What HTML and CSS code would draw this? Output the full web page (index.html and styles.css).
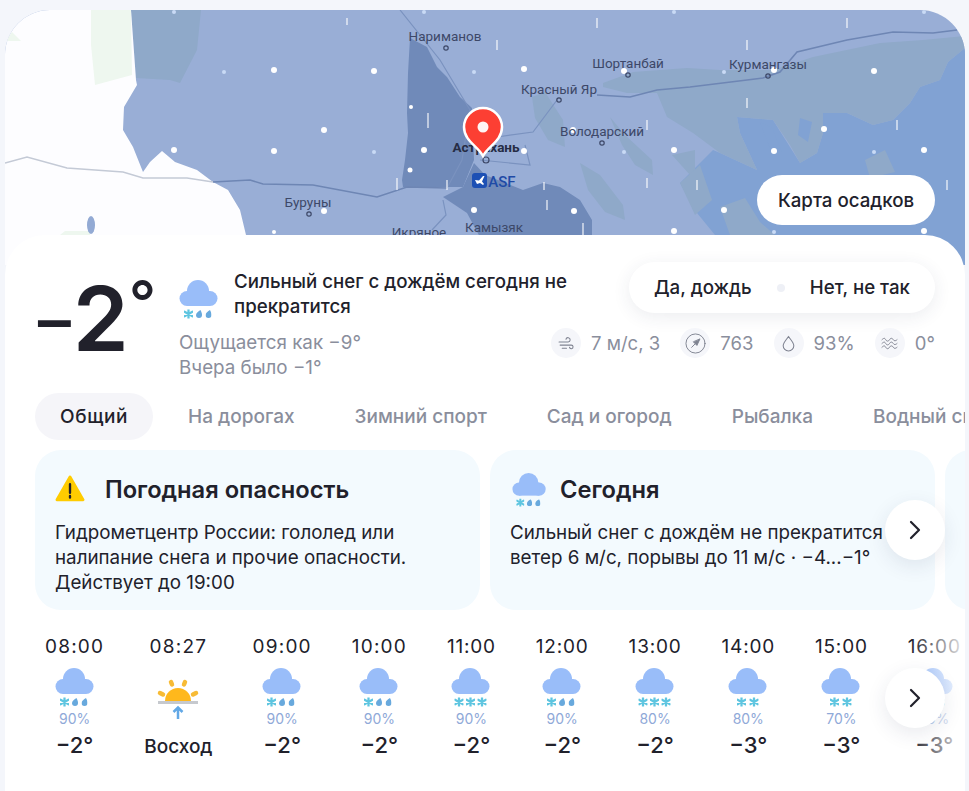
FILE: index.html
```html
<!DOCTYPE html>
<html lang="ru">
<head>
<meta charset="utf-8">
<title>Погода</title>
<link rel="stylesheet" href="styles.css">
</head>
<body>
<svg class="defs" width="0" height="0" aria-hidden="true">
  <defs>
    <symbol id="cloud" viewBox="0 0 40 40">
      <g class="cl"><circle cx="19" cy="12" r="11"/><circle cx="8" cy="19.5" r="7.5"/><circle cx="31" cy="19.5" r="7.5"/><rect x="8" y="12" width="23" height="15"/></g>
    </symbol>
    <symbol id="flake" viewBox="0 0 8 8">
      <path class="fl" d="M4 0v8M.5 2l7 4M.5 6l7-4"/>
    </symbol>
    <symbol id="drop" viewBox="0 0 6 8">
      <path class="dr" d="M4.5 0C5.5 2 6 3.500 6 5A3 3 0 0 1 0 5C0 3 2.500 1 4.500 0Z"/>
    </symbol>
    <symbol id="mix" viewBox="0 0 40 40">
      <use href="#cloud" width="40" height="40"/>
      <use href="#flake" x="5" y="30.500" width="9" height="9"/>
      <use href="#drop" x="17" y="31" width="6" height="8"/>
      <use href="#drop" x="26.500" y="31" width="6" height="8"/>
    </symbol>
    <symbol id="snow3" viewBox="0 0 40 40">
      <use href="#cloud" width="40" height="40"/>
      <use href="#flake" x="3.500" y="30.500" width="9" height="9"/>
      <use href="#flake" x="15" y="30.500" width="9" height="9"/>
      <use href="#flake" x="26.500" y="30.500" width="9" height="9"/>
    </symbol>
    <symbol id="snow2" viewBox="0 0 40 40">
      <use href="#cloud" width="40" height="40"/>
      <use href="#flake" x="9" y="30.500" width="9" height="9"/>
      <use href="#flake" x="21.500" y="30.500" width="9" height="9"/>
    </symbol>
  </defs>
</svg>

<main class="page">
  <section class="map">
    <svg class="map-art" viewBox="5 10 960 255" width="960" height="255">
      <rect class="m-base" x="5" y="10" width="960" height="255"/>
      <path class="m-sea" d="M965 48L948 62L940 80L920 87L910 103L893 120L873 125L847 113L823 113L823 133L817 153L800 163L773 120L737 117L740 133L757 170L720 153L713 150L680 183L697 213L715 235L735 265L965 265Z"/>
      <path class="m-teal" d="M603 83L633 72L687 68L720 70L773 70L813 57L880 43L923 40L965 36L965 48L948 62L940 80L920 87L910 103L893 120L873 125L847 113L823 113L823 133L817 153L800 163L790 145L773 120L737 117L740 133L757 170L720 153L693 133L667 117L657 93L627 93L603 87Z"/>
      <path class="m-teal" d="M532 97L545 92L563 120L565 147L548 140L535 118Z"/>
      <path class="m-teal" d="M580 163L600 175L623 205L625 220L605 212L588 190Z"/>
      <path class="m-teal" d="M610 117L625 135L652 160L653 175L635 165L622 145Z"/>
      <path class="m-teal" d="M672 155L695 150L695 170L690 175Z"/>
      <path class="m-teal" d="M680 183L700 165L712 200L695 215Z"/>
      <path class="m-teal" d="M720 207L745 198L760 222L775 235L730 235Z"/>
      <path class="m-teal" d="M865 160L885 150L895 172L870 178Z"/>
      <path class="m-teal" d="M131 10L201 10L197 50L180 83L170 80L136 78Z"/>
      <path class="m-sea" d="M760 122L772 128L782 152L770 148ZM800 118L812 122L808 142L798 135Z"/>
      <path class="m-dark" d="M410 38L427 47L437 67L447 77L460 97L472 108L474 160L463 187L447 187L403 187L402 180L405 160L408 133L407 113L408 73Z"/>
      <path class="m-dark" d="M443 197L463 187L474 163L485 175L523 190L543 183L560 187L580 200L592 220L592 265L495 265L467 213Z"/>
      <path class="m-land" d="M5 10L131 10L136 80L137 85L124 107L123 130L133 147L143 172L150 162L162 151L175 162L197 170L213 182L228 190L240 210L246 235L246 265L5 265Z"/>
      <path class="m-green" d="M91 10L131 10L132 75L95 85L91 45Z"/>
      <path class="m-green" d="M5 41L21 41L12 32Z"/>
      <path class="m-green" d="M60 235L65 231L90 231L90 240L60 240Z"/>
      <ellipse class="m-lake" cx="91" cy="225" rx="4" ry="9"/>
      <path class="m-border-light" d="M5 163L27 157L67 168L123 172L143 178L187 178L213 182"/>
      <path class="m-border" d="M213 182L250 180L263 184L313 185L377 197L407 187L447 188"/>
      <path class="m-border" d="M597 95L630 97L657 90L690 87L747 80L763 78L780 72L797 52L847 40L893 32L933 33L957 30"/>
      <path class="m-river" d="M497 137L533 132L557 100M447 188L462 160L470 110L440 60L400 10M443 200L446 215L432 230M480 160L530 165L525 145"/>
      <g class="m-lines">
        <path d="M347 18v7M428 113v15M397 178v12M447 180v10M597 18v10M847 18v10M497 40v10M747 40v10M747 98v10M647 120v10M897 120v10M647 178v10M697 180v10M547 200v10M947 180v10M583 223v12M544 182v8"/>
      </g>
      <g class="m-dots">
        <circle cx="274" cy="70" r="3"/><circle cx="374" cy="71" r="3"/><circle cx="324" cy="130" r="3"/><circle cx="274" cy="151" r="3"/><circle cx="174" cy="150" r="3"/><circle cx="324" cy="211" r="3"/><circle cx="411" cy="107" r="2"/><circle cx="424" cy="150" r="3"/><circle cx="410" cy="170" r="2.500"/><circle cx="474" cy="210" r="3"/><circle cx="274" cy="232" r="2"/><circle cx="524" cy="69" r="3"/><circle cx="624" cy="71" r="3"/><circle cx="774" cy="70" r="3"/><circle cx="874" cy="71" r="3"/><circle cx="824" cy="129" r="3"/><circle cx="774" cy="151" r="3"/><circle cx="674" cy="150" r="3"/><circle cx="574" cy="211" r="3"/><circle cx="924" cy="150" r="3"/><circle cx="724" cy="210" r="3"/><circle cx="674" cy="231" r="3"/><circle cx="924" cy="231" r="3"/><circle cx="524" cy="151" r="3"/><circle cx="573" cy="130" r="3"/>
      </g>
      <g class="m-dots-soft">
        <circle cx="224" cy="72" r="2"/><circle cx="374" cy="152" r="2"/><circle cx="474" cy="72" r="2"/><circle cx="724" cy="72" r="2"/><circle cx="874" cy="152" r="2"/><circle cx="624" cy="152" r="2"/><circle cx="774" cy="232" r="2"/><circle cx="174" cy="12" r="2"/><circle cx="424" cy="12" r="2"/><circle cx="674" cy="12" r="2"/><circle cx="924" cy="12" r="2"/>
      </g>
      <g class="m-towns">
        <circle cx="446" cy="48" r="2.200"/><circle cx="628" cy="75" r="2.200"/><circle cx="768" cy="76" r="2.200"/><circle cx="559" cy="100" r="2.200"/><circle cx="602" cy="143" r="2.200"/><circle cx="486" cy="160" r="3"/><circle cx="309" cy="214" r="2.200"/>
      </g>
      <g class="m-labels">
        <text x="445" y="41">Нариманов</text>
        <text x="628" y="68">Шортанбай</text>
        <text x="768" y="69">Курмангазы</text>
        <text x="559" y="94">Красный Яр</text>
        <text x="602" y="136">Володарский</text>
        <text x="308" y="207">Буруны</text>
        <text x="419" y="237">Икряное</text>
        <text x="494" y="232">Камызяк</text>
        <text class="m-city" x="486" y="152">Астрахань</text>
        <text class="m-air" x="502" y="187">ASF</text>
      </g>
      <rect class="m-air-box" x="472" y="173" width="15" height="15" rx="3"/>
      <path class="m-air-plane" d="M475 180l4 0.500L483 176l1.500 0L482 181.500L484 184L483 185L480 183L477 184Z"/>
      <path class="m-pin" d="M483 156C478 146 464 141 464 127A19 19 0 0 1 502 127C502 141 488 146 483 156Z"/>
      <circle class="m-pin-dot" cx="483" cy="127" r="5.500"/>
    </svg>
    <button class="map-btn" type="button">Карта осадков</button>
  </section>

  <section class="card">
    <header class="head">
      <div class="temp"><span class="t-minus">−</span>2<span class="t-deg">°</span></div>
      <div class="summary">
        <div class="cond">
          <svg class="cond-icon"><use href="#mix"/></svg>
          <p class="cond-text">Сильный снег с дождём сегодня не прекратится</p>
        </div>
        <p class="sub">Ощущается как −9°<br>Вчера было −1°</p>
      </div>
      <div class="right">
        <div class="vote">
          <span class="vote-item">Да, дождь</span>
          <span class="vote-dot"></span>
          <span class="vote-item">Нет, не так</span>
        </div>
        <ul class="stats">
          <li class="stat">
            <span class="stat-ic"><svg viewBox="0 0 16 16" class="st"><path d="M1 6.500h8.500a2 2 0 1 0-2-2.500M2 9.500h10.500a1.700 1.700 0 1 1-1.700 2M4 12.500h4"/></svg></span>7 м/с, З
          </li>
          <li class="stat">
            <span class="stat-ic"><svg viewBox="0 0 22 22" class="st st-big"><circle cx="11" cy="11" r="10"/><path class="st-fill" d="M15.500 6.500L12.500 13L9 9.500Z"/><path d="M10.500 11.500L7 15"/></svg></span>763
          </li>
          <li class="stat">
            <span class="stat-ic"><svg viewBox="0 0 16 16" class="st"><path d="M8 1.500C10.500 5 13 7.500 13 10A5 5 0 0 1 3 10C3 7.500 5.500 5 8 1.500Z"/></svg></span>93%
          </li>
          <li class="stat">
            <span class="stat-ic"><svg viewBox="0 0 18 14" class="st"><path d="M1 3c2-2 3-2 4 0s3 2 4 0 3-2 4 0 3 1 4 0M1 7c2-2 3-2 4 0s3 2 4 0 3-2 4 0 3 1 4 0M1 11c2-2 3-2 4 0s3 2 4 0 3-2 4 0 3 1 4 0"/></svg></span>0°
          </li>
        </ul>
      </div>
    </header>

    <nav class="tabs">
      <a class="tab is-active">Общий</a>
      <a class="tab">На дорогах</a>
      <a class="tab">Зимний спорт</a>
      <a class="tab">Сад и огород</a>
      <a class="tab">Рыбалка</a>
      <a class="tab">Водный спорт</a>
    </nav>

    <div class="slides">
      <article class="slide">
        <h2 class="slide-title">
          <svg class="warn" viewBox="0 0 28 26"><path class="warn-bg" d="M14 2L26 23H2Z"/><path class="warn-mark" d="M14 8.500v8M14 19.500v1.500"/></svg>
          Погодная опасность
        </h2>
        <p class="slide-text">Гидрометцентр России: гололед или<br>налипание снега и прочие опасности.<br>Действует до 19:00</p>
      </article>
      <article class="slide">
        <h2 class="slide-title">
          <svg class="slide-ic"><use href="#mix"/></svg>
          Сегодня
        </h2>
        <p class="slide-text">Сильный снег с дождём не прекратится<br>ветер 6 м/с, порывы до 11 м/с · −4...−1°</p>
      </article>
      <article class="slide"></article>
      <button class="next next-slides" type="button"><svg viewBox="0 0 12 20"><path d="M2 2l8 8-8 8"/></svg></button>
    </div>

    <div class="hours-wrap">
      <ul class="hours">
        <li class="hour"><span class="h-time">08:00</span><svg class="h-ic"><use href="#mix"/></svg><span class="h-pct">90%</span><span class="h-temp">−2°</span></li>
        <li class="hour"><span class="h-time">08:27</span>
          <svg class="h-sun" viewBox="0 -9 44 60">
            <path class="sun" d="M9 25a13 13 0 0 1 26 0Z"/>
            <g class="rays"><path d="M15 6l1 2.500M29 6l-1 2.500M4 17l3 1.500M40 17l-3 1.500"/></g>
            <rect class="hz" x="2" y="25" width="40" height="3"/>
            <path class="ar" d="M22 43V31M17.500 36L22 31.500L26.500 36"/>
          </svg>
          <span class="h-temp h-label">Восход</span></li>
        <li class="hour"><span class="h-time">09:00</span><svg class="h-ic"><use href="#mix"/></svg><span class="h-pct">90%</span><span class="h-temp">−2°</span></li>
        <li class="hour"><span class="h-time">10:00</span><svg class="h-ic"><use href="#mix"/></svg><span class="h-pct">90%</span><span class="h-temp">−2°</span></li>
        <li class="hour hour-narrow"><span class="h-time">11:00</span><svg class="h-ic"><use href="#snow3"/></svg><span class="h-pct">90%</span><span class="h-temp">−2°</span></li>
        <li class="hour hour-narrow"><span class="h-time">12:00</span><svg class="h-ic"><use href="#mix"/></svg><span class="h-pct">90%</span><span class="h-temp">−2°</span></li>
        <li class="hour hour-narrow"><span class="h-time">13:00</span><svg class="h-ic"><use href="#snow3"/></svg><span class="h-pct">80%</span><span class="h-temp">−2°</span></li>
        <li class="hour hour-narrow"><span class="h-time">14:00</span><svg class="h-ic"><use href="#snow2"/></svg><span class="h-pct">80%</span><span class="h-temp">−3°</span></li>
        <li class="hour hour-narrow"><span class="h-time">15:00</span><svg class="h-ic"><use href="#snow2"/></svg><span class="h-pct">70%</span><span class="h-temp">−3°</span></li>
        <li class="hour hour-narrow"><span class="h-time">16:00</span><svg class="h-ic"><use href="#snow2"/></svg><span class="h-pct">70%</span><span class="h-temp">−3°</span></li>
      </ul>
      <div class="fade"></div>
      <button class="next next-hours" type="button"><svg viewBox="0 0 12 20"><path d="M2 2l8 8-8 8"/></svg></button>
    </div>
  </section>
</main>
</body>
</html>
```
FILE: styles.css
```css
* { box-sizing: border-box; }
html, body { margin: 0; height: 100%; }
body {
  background: #f4f6fb;
  font-family: Inter, "Noto Sans", sans-serif;
  color: #21212b;
  overflow: hidden;
}
p, h2, ul { margin: 0; padding: 0; }
ul { list-style: none; }
button { font: inherit; color: inherit; border: 0; cursor: pointer; }
.defs { position: absolute; }

.cl { fill: #99bdf9; }
.fl { stroke: #5ec5e0; stroke-width: 2; fill: none; stroke-linecap: round; }
.dr { fill: #68a9dd; }

.page { width: 960px; margin-left: 5px; padding-top: 10px; }

/* map */
.map { position: relative; height: 255px; border-radius: 45px 45px 0 0; overflow: hidden; }
.map-art { display: block; }
.m-base { fill: #99aed6; }
.m-sea { fill: #81a2d3; }
.m-teal { fill: #8fa9c9; }
.m-dark { fill: #708ab9; }
.m-land { fill: #fdfdff; }
.m-green { fill: #eef7ef; }
.m-lake { fill: #93aad4; }
.m-border-light { fill: none; stroke: #c4cad6; stroke-width: 1.500; }
.m-border { fill: none; stroke: #6e86b4; stroke-width: 1.500; }
.m-river { fill: none; stroke: #7a92bf; stroke-width: 1.200; }
.m-lines path { stroke: #fff; stroke-width: 1.300; fill: none; opacity: .85; }
.m-dots { fill: #fff; }
.m-dots-soft { fill: #c9daf5; }
.m-towns { fill: none; stroke: #3d4868; stroke-width: 1.200; }
.m-labels text { font-family: Roboto, sans-serif; font-size: 13.500px; fill: #3d4868; text-anchor: middle; }
.m-labels .m-city { font-weight: 700; fill: #262d45; }
.m-labels .m-air { font-size: 15px; fill: #1f4ba6; font-weight: 500; }
.m-air-box { fill: #1d50b4; }
.m-air-plane { fill: #fff; }
.m-pin { fill: #fc3f33; stroke: #fff; stroke-width: 2.500; }
.m-pin-dot { fill: #fff; opacity: .95; }
.map-btn {
  position: absolute;
  top: 165px;
  right: 30px;
  width: 178px;
  height: 50px;
  border-radius: 25px;
  background: #fff;
  font-size: 18.700px;
  font-weight: 500;
  padding: 0;
}

/* card */
.card {
  position: relative;
  margin-top: -30px;
  height: 556px;
  background: #fff;
  border-radius: 40px 40px 0 0;
  overflow: hidden;
}
.head { display: flex; padding: 27px 30px 0 30px; height: 146px; }
.temp {
  flex: none;
  width: 144px;
  height: 90px;
  padding-top: 12px;
  font-size: 90px;
  line-height: 90px;
  font-weight: 600;
  white-space: nowrap;
}
.t-minus { font-size: 70px; font-weight: 500; line-height: 0; vertical-align: 7px; margin-left: -4px; margin-right: -5px; }
.t-deg { font-size: 60px; font-weight: 500; line-height: 0; vertical-align: 27px; margin-left: 0; }
.summary { flex: 1; min-width: 0; }
.cond { display: flex; align-items: flex-start; gap: 15px; padding-top: 7px; }
.cond-icon { width: 40px; height: 40px; margin-top: 10px; flex: none; }
.cond-text { font-size: 18.700px; line-height: 25px; font-weight: 500; width: 345px; flex: none; }
.sub { font-size: 18.800px; line-height: 25px; color: #8a8e9c; margin-top: 11px; }
.right { flex: none; width: 384px; display: flex; flex-direction: column; align-items: flex-end; }
.vote {
  display: flex;
  align-items: center;
  width: 306px;
  height: 51px;
  padding: 0 25px;
  justify-content: space-between;
  border-radius: 26px;
  background: #fff;
  box-shadow: 0 4px 18px rgba(40, 50, 90, .09);
  font-size: 18.700px;
  font-weight: 500;
}
.vote-dot { width: 8px; height: 8px; border-radius: 50%; background: #eef0f6; }
.stats { display: flex; justify-content: space-between; width: 100%; margin-top: 15px; color: #8a8e9c; font-size: 18.500px; }
.stat { display: flex; align-items: center; gap: 10px; white-space: nowrap; }
.stat-ic { width: 30px; height: 30px; border-radius: 50%; background: #f5f6fa; display: flex; align-items: center; justify-content: center; }
.st { width: 17px; height: 17px; fill: none; stroke: #7f8391; stroke-width: 1; stroke-linecap: round; }
.st-big { width: 21px; height: 21px; }
.st-fill { fill: #7f8391; }

/* tabs */
.tabs { display: flex; gap: 10px; padding-left: 30px; margin-top: 12px; white-space: nowrap; }
.tab {
  flex: none;
  padding: 0 25px;
  height: 47px;
  line-height: 47px;
  border-radius: 24px;
  font-size: 19px;
  font-weight: 500;
  color: #8a8e9c;
}
.tab.is-active { background: #f5f5f9; color: #21212b; letter-spacing: .6px; }

/* slides */
.slides { position: relative; display: flex; gap: 10px; padding-left: 30px; margin-top: 10px; }
.slide {
  flex: none;
  width: 445px;
  height: 160px;
  padding: 20px;
  border-radius: 26px;
  background: #f3fafe;
  overflow: hidden;
}
.slide-title { display: flex; align-items: center; gap: 20px; height: 38px; font-size: 23.700px; font-weight: 600; }
.warn { width: 30px; height: 28px; flex: none; }
.warn-bg { fill: #ffcc00; stroke: #ffcc00; stroke-width: 3; stroke-linejoin: round; }
.warn-mark { stroke: #21212b; stroke-width: 2.200; stroke-linecap: round; fill: none; }
.slide-ic { width: 35px; height: 35px; flex: none; margin-left: 2px; margin-right: -7px; }
.slide-text { font-size: 18.800px; line-height: 25px; margin-top: 12px; white-space: nowrap; }

.next {
  position: absolute;
  width: 60px;
  height: 60px;
  border-radius: 50%;
  background: #fff;
  box-shadow: 0 6px 20px rgba(40, 50, 90, .10);
  display: flex;
  align-items: center;
  justify-content: center;
  padding: 0;
}
.next svg { width: 12px; height: 20px; fill: none; stroke: #21212b; stroke-width: 2.200; stroke-linecap: round; stroke-linejoin: round; }
.next-slides { left: 880px; top: 50px; }

/* hours */
.hours-wrap { position: relative; margin-top: 25px; }
.hours { display: flex; gap: 40px; padding-left: 40px; }
.hour { flex: none; display: flex; flex-direction: column; align-items: center; }
.h-time { font-size: 19px; line-height: 24px; letter-spacing: 1.200px; }
.hour-narrow .h-time { letter-spacing: .8px; }
.h-ic { width: 40px; height: 40px; margin-top: 8px; }
.h-sun { width: 44px; height: 60px; margin-top: 8px; }
.h-pct { font-size: 14px; line-height: 20px; color: #8fa9d8; height: 20px; margin-top: 2px; }
.h-temp { font-size: 22px; line-height: 24px; font-weight: 500; margin-top: 4px; }
.h-label { font-size: 19px; margin-top: 8px; }
.sun { fill: #ffb81c; }
.rays path { stroke: #f7bb35; stroke-width: 4.500; stroke-linecap: round; fill: none; }
.hz { fill: #c6c9ce; }
.ar { stroke: #62a8e6; stroke-width: 2.500; fill: none; }
.fade { position: absolute; top: 0; right: 0; width: 55px; height: 140px; background: linear-gradient(90deg, rgba(255,255,255,0), rgba(255,255,255,.9)); }
.next-hours { left: 880px; top: 33px; }
```
